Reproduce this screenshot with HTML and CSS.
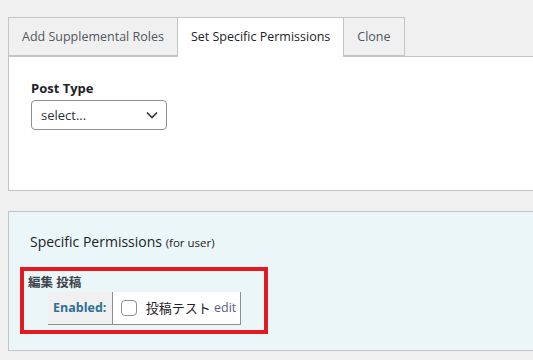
FILE: index.html
```html
<!DOCTYPE html>
<html lang="ja">
    <head>
        <meta charset="UTF-8">
        <meta name="viewport" content="width=device-width, initial-scale=1.0">
        <title>Permissions</title>
        <link rel="stylesheet" href="styles.css">
    </head>

    <body>
        <div class="wrap">
            <div class="tabs">
                <div class="tab">Add Supplemental Roles</div>
                <div class="tab active">Set Specific Permissions</div>
                <div class="tab">Clone</div>
            </div>

            <div class="panel">
                <label class="field-label" for="postType">Post Type</label>
                <div class="select-box">
                    <span>select...</span>
                    <svg width="12" height="8" viewBox="0 0 12 8"><path d="M1 1.5 L6 6.5 L11 1.5" fill="none" stroke="#2c3338" stroke-width="1.6"/></svg>
                </div>
            </div>

            <div class="panel perms">
                <h3>Specific Permissions <small>(for user)</small></h3>
                <div class="highlight">
                    <div class="cap-name">編集 投稿</div>
                    <table class="cap-table">
                        <tr>
                            <th>Enabled:</th>
                            <td>
                                <span class="checkbox"></span>
                                <span class="item">投稿テスト</span>
                                <a href="#" class="edit">edit</a>
                            </td>
                        </tr>
                    </table>
                </div>
            </div>
        </div>
    </body>
</html>
```

FILE: styles.css
```css
* {
    box-sizing: border-box;
    margin: 0;
    padding: 0;
}
body {
    background-color: #f0f0f1;
    font-family: "Open Sans", "Noto Sans CJK JP", sans-serif;
    font-size: 12.5px;
    color: #1d2327;
    padding: 17px 0 0 8px;
    overflow: hidden;
}
.wrap {
    width: 525px;
}
.tabs {
    display: flex;
    height: 39px;
}
.tab {
    height: 39px;
    line-height: 38px;
    padding: 0 13px;
    background-color: #f0f0f1;
    border: 1px solid #c3c4c7;
    border-left: none;
    color: #50575e;
}
.tab:first-child {
    border-left: 1px solid #c3c4c7;
}
.tab.active {
    background-color: #fff;
    color: #1d2327;
    height: 40px;
    border-bottom: none;
    position: relative;
    z-index: 1;
}
.panel {
    background-color: #fff;
    border: 1px solid #c3c4c7;
    border-right: none;
    height: 135px;
    padding: 22px 22px;
}
.field-label {
    display: block;
    font-weight: bold;
    font-size: 13px;
    line-height: 18px;
    margin-bottom: 3px;
}
.select-box {
    width: 136px;
    height: 30px;
    border: 1px solid #8c8f94;
    border-radius: 4px;
    display: flex;
    align-items: center;
    justify-content: space-between;
    padding: 0 8px 0 9px;
    font-size: 13px;
    color: #2c3338;
}
.perms {
    margin-top: 20px;
    background-color: #eaf6f7;
    height: 140px;
    padding: 20px 11px;
}
.perms h3 {
    font-weight: normal;
    font-size: 14px;
    line-height: 20px;
    margin-left: 10px;
    margin-bottom: 14px;
}
.perms h3 small {
    font-size: 11.5px;
}
.highlight {
    width: 248px;
    height: 67px;
    border: 4px solid #e21b23;
    padding: 3px 4px;
}
.cap-name {
    font-weight: bold;
    font-size: 12.5px;
    line-height: 17px;
    color: #3c434a;
}
.cap-table {
    border-collapse: collapse;
    margin-left: 20px;
    margin-top: 1px;
}
.cap-table th {
    background-color: #f0f0f1;
    color: #2e6f95;
    font-size: 12.5px;
    width: 64px;
    height: 32px;
    padding: 0 5px;
    text-align: center;
    border-bottom: 1px solid #8c8f94;
    border-right: 1px solid #8c8f94;
}
.cap-table td {
    background-color: #fff;
    padding: 0 4px 0 8px;
    height: 32px;
    white-space: nowrap;
    border-bottom: 1px solid #8c8f94;
    border-right: 1px solid #8c8f94;
}
.checkbox {
    display: inline-block;
    width: 16px;
    height: 16px;
    border: 1px solid #8c8f94;
    border-radius: 4px;
    vertical-align: middle;
    margin-right: 6px;
    background-color: #fff;
}
.item {
    font-size: 13px;
    vertical-align: middle;
    color: #1d2327;
}
.edit {
    font-size: 12.5px;
    color: #5b5f87;
    text-decoration: none;
    vertical-align: middle;
}
```
